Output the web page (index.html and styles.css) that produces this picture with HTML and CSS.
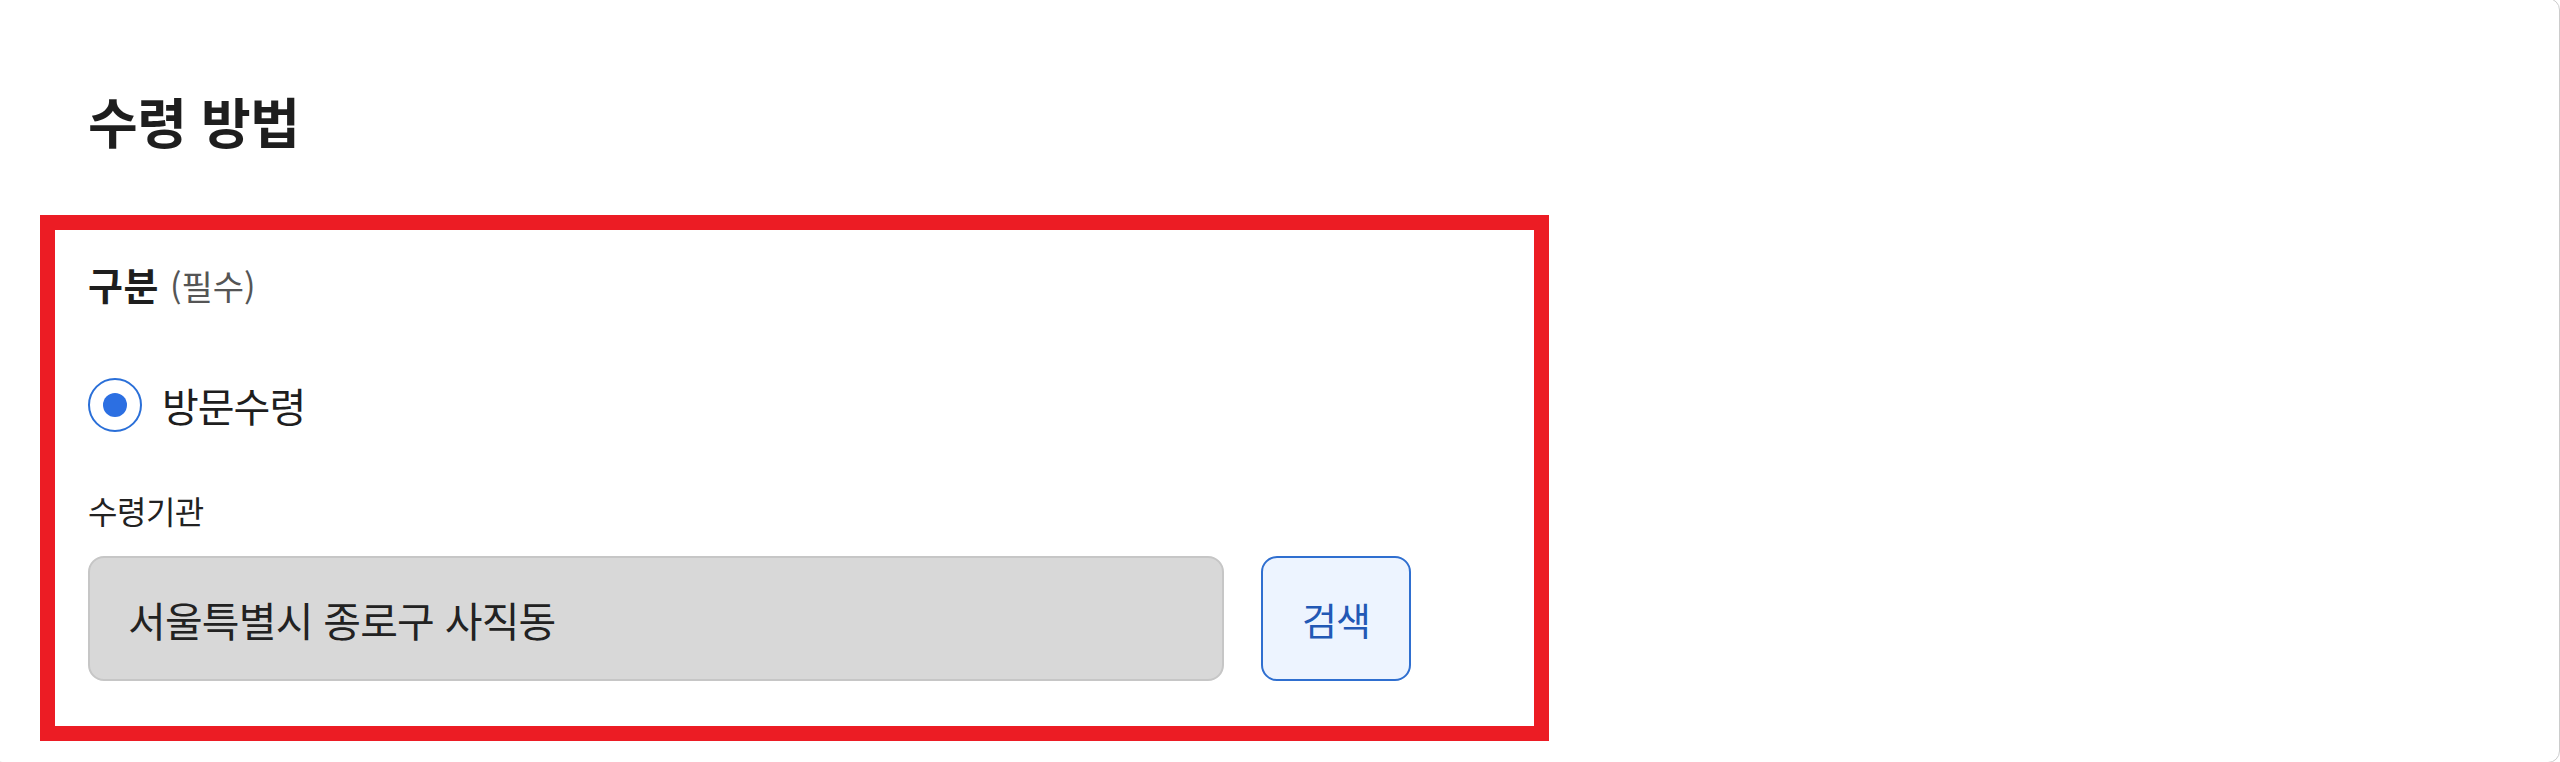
FILE: index.html
```html
<!DOCTYPE html>
<html lang="ko">
<head>
    <meta charset="UTF-8">
    <meta name="viewport" content="width=device-width, initial-scale=1.0">
    <title>수령 방법</title>
    <link rel="stylesheet" href="styles.css">
</head>
<body>

<div class="card">
    <h2 class="card-title">수령 방법</h2>

    <div class="field-box">
        <div class="field-label">구분 <span class="required">(필수)</span></div>

        <label class="radio-row">
            <input type="radio" name="receiveType" value="visit" checked>
            <span>방문수령</span>
        </label>

        <div class="sub-label">수령기관</div>
        <div class="search-row">
            <input type="text" class="place-input" value="서울특별시 종로구 사직동" readonly>
            <button class="search-button">검색</button>
        </div>
    </div>
</div>

</body>
</html>
```

FILE: styles.css
```css
body {
    margin: 0;
    overflow: hidden;
    font-family: 'Noto Sans CJK KR', 'Noto Sans', sans-serif;
    background-color: #ffffff;
    color: #1e1e1e;
}
.card {
    box-sizing: border-box;
    height: 765px;
    margin: -2px 0 0 -10px;
    border: 1px solid #cccccc;
    border-radius: 12px;
    padding: 92px 49px 0;
}
.card-title {
    margin: 0 0 64px 48px;
    font-size: 54px;
    line-height: 60px;
    font-weight: 700;
    letter-spacing: -0.5px;
    color: #1e1e1e;
}
.field-box {
    width: 1509px;
    box-sizing: border-box;
    border: 15px solid #ec1c24;
    padding: 32px 33px 45px;
}
.field-label {
    font-size: 38px;
    line-height: 44px;
    font-weight: 700;
    letter-spacing: 0.5px;
}
.required {
    font-size: 34px;
    font-weight: 400;
    color: #555555;
    letter-spacing: 0;
}
.radio-row {
    display: flex;
    align-items: center;
    gap: 20px;
    margin-top: 70px;
    height: 54px;
    font-size: 40px;
    letter-spacing: -1px;
    cursor: pointer;
}
.radio-row input {
    appearance: none;
    margin: 0;
    width: 54px;
    height: 54px;
    border: 2px solid #2a6fd8;
    border-radius: 50%;
    display: flex;
    align-items: center;
    justify-content: center;
    background: #ffffff;
}
.radio-row input:checked::after {
    content: '';
    width: 24px;
    height: 24px;
    border-radius: 50%;
    background-color: #2c6fe2;
}
.sub-label {
    margin-top: 58px;
    font-size: 32px;
    line-height: 40px;
    letter-spacing: -0.5px;
    color: #222222;
}
.search-row {
    display: flex;
    gap: 37px;
    margin-top: 26px;
}
.place-input {
    box-sizing: border-box;
    width: 1136px;
    height: 125px;
    padding: 0 38px;
    border: 2px solid #c6c6c6;
    border-radius: 16px;
    background-color: #d8d8d8;
    font-family: inherit;
    font-size: 41px;
    letter-spacing: -0.8px;
    color: #222222;
    outline: none;
}
.search-button {
    box-sizing: border-box;
    width: 150px;
    height: 125px;
    border: 2px solid #2f6fd0;
    border-radius: 16px;
    background-color: #edf4ff;
    font-family: inherit;
    font-size: 38px;
    letter-spacing: -1px;
    color: #2258b5;
    cursor: pointer;
}
```
